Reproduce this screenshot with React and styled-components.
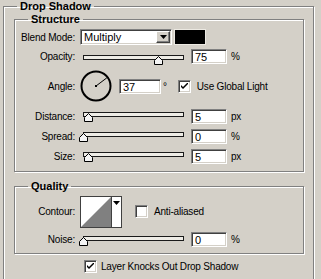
import React from 'react';
import styled, { createGlobalStyle } from 'styled-components';

const BG = '#d4d0c8';

const Global = createGlobalStyle`
  html, body { margin: 0; padding: 0; background: ${BG}; }
  body {
    font-family: "Liberation Sans", Arial, sans-serif;
    font-size: 10px;
    letter-spacing: -0.2px;
    color: #000;
  }
  #root { width: 321px; height: 279px; overflow: hidden; }
`;

const Panel = styled.fieldset`
  margin: 0 0 0 3px;
  padding: 0 0 0 10px;
  width: 311px;
  min-height: 300px;
  box-sizing: border-box;
  border: 1px solid #808080;
  box-shadow: inset 1px 1px 0 #fff, 1px 1px 0 #fff;
`;

const Group = styled.fieldset`
  margin: ${p => p.$mt || 0}px 0 0 0;
  padding: ${p => p.$pt}px 0 ${p => p.$pb}px 0;
  width: 290px;
  box-sizing: border-box;
  border: 1px solid #808080;
  box-shadow: inset 1px 1px 0 #fff, 1px 1px 0 #fff;
`;

const Legend = styled.legend`
  margin-left: ${p => p.$ml}px;
  padding: 0 3px;
  font: bold 11px/13px "Liberation Sans", Arial, sans-serif;
  letter-spacing: 0;
`;

const Row = styled.div`
  display: flex;
  align-items: center;
  height: ${p => p.$h}px;
  margin-top: ${p => p.$mt || 0}px;
  padding-left: ${p => p.$pl || 0}px;
`;

const Label = styled.span`
  width: 60px;
  margin-right: 5px;
  text-align: right;
  white-space: nowrap;
  flex: none;
`;

const Text = styled.span`
  margin-left: ${p => p.$ml || 0}px;
  white-space: nowrap;
`;

const Select = styled.div`
  display: flex;
  align-items: center;
  width: 92px;
  height: 16px;
  box-sizing: border-box;
  background: #fff;
  border: 1px solid;
  border-color: #808080 #fff #fff #808080;
  box-shadow: inset 1px 1px 0 #404040, inset -1px -1px 0 ${BG};
  padding: 1px 1px 1px 2px;
  font-size: 11px;
`;

const SelectText = styled.span`
  flex: 1;
  padding-left: 1px;
  letter-spacing: 0;
`;

const DropButton = styled.span`
  display: flex;
  align-items: center;
  justify-content: center;
  width: 14px;
  height: 12px;
  box-sizing: border-box;
  background: ${BG};
  border: 1px solid;
  border-color: #fff #404040 #404040 #fff;
  box-shadow: inset -1px -1px 0 #808080;
`;

const Swatch = styled.div`
  width: 32px;
  height: 16px;
  box-sizing: border-box;
  margin-left: 2px;
  background: #000;
  border: 1px solid #ece9e2;
`;

const Field = styled.div`
  width: ${p => p.$w || 36}px;
  height: 15px;
  box-sizing: border-box;
  margin-left: ${p => p.$ml || 0}px;
  background: #fff;
  border: 1px solid;
  border-color: #808080 #fff #fff #808080;
  box-shadow: inset 1px 1px 0 #404040, inset -1px -1px 0 ${BG};
  padding: 1px 0 0 3px;
  font-size: 11px;
  line-height: 12px;
  letter-spacing: 0;
`;

const Unit = styled.span`
  margin-left: 4px;
  font-size: 10px;
`;

const SliderBox = styled.div`
  position: relative;
  flex: none;
  width: 106px;
  height: 10px;
  align-self: flex-start;
  margin-top: ${p => p.$top}px;
`;

const Track = styled.div`
  margin-left: 3px;
  width: 101px;
  height: 5px;
  box-sizing: border-box;
  background: #eeece6;
  border: 1px solid #1a1a1a;
`;

const ThumbSvg = styled.svg`
  position: absolute;
  top: 1px;
  display: block;
`;

const Dial = styled.svg`
  display: block;
  flex: none;
`;

const CheckBox = styled.span`
  display: inline-flex;
  align-items: center;
  justify-content: center;
  flex: none;
  width: 13px;
  height: 13px;
  box-sizing: border-box;
  margin-left: ${p => p.$ml || 0}px;
  background: #fff;
  border: 1px solid;
  border-color: #808080 #fff #fff #808080;
  box-shadow: inset 1px 1px 0 #404040, inset -1px -1px 0 ${BG};
`;

const Contour = styled.div`
  display: flex;
  width: 42px;
  height: 32px;
  box-sizing: border-box;
  border: 1px solid #404040;
  background: #fff;
  flex: none;
`;

const ContourPreview = styled.svg`
  display: block;
  width: 30px;
  height: 30px;
  border-right: 1px solid #404040;
`;

const ContourArrow = styled.div`
  flex: 1;
  display: flex;
  justify-content: center;
  padding-top: 4px;
`;

function Thumb({ left }) {
  return (
    <ThumbSvg width="9" height="9" viewBox="0 0 9 9" style={{ left }}>
      <path d="M0.5 8.5 V4.5 L4.5 0.5 L8.5 4.5 V8.5 Z" fill="#f4f4f4" stroke="#000" />
    </ThumbSvg>
  );
}

function Slider({ thumb, top }) {
  return (
    <SliderBox $top={top}>
      <Track />
      <Thumb left={thumb} />
    </SliderBox>
  );
}

function Tick() {
  return (
    <svg width="7" height="7" viewBox="0 0 7 7">
      <path d="M0 2 L0 4 L2 6 L7 1 L7 -1 L2 4 Z" fill="#000" />
    </svg>
  );
}

function Arrow() {
  return (
    <svg width="7" height="4" viewBox="0 0 7 4">
      <path d="M0 0 H7 L3.5 4 Z" fill="#000" />
    </svg>
  );
}

const rad = (37 * Math.PI) / 180;

export default function App() {
  return (
    <>
      <Global />
      <Panel>
        <Legend $ml={3}>Drop Shadow</Legend>
        <Group $pt={2} $pb={5}>
          <Legend $ml={13}>Structure</Legend>
          <Row $h={18}>
            <Label>Blend Mode:</Label>
            <Select>
              <SelectText>Multiply</SelectText>
              <DropButton><Arrow /></DropButton>
            </Select>
            <Swatch />
          </Row>
          <Row $h={20}>
            <Label>Opacity:</Label>
            <Slider thumb={74} top={9} />
            <Field $ml={5}>75</Field>
            <Unit>%</Unit>
          </Row>
          <Row $h={40}>
            <Label>Angle:</Label>
            <Dial width="32" height="32" viewBox="0 0 32 32">
              <circle cx="16" cy="16" r="14.5" fill="none" stroke="#000" strokeWidth="2" />
              <rect x="15" y="15" width="2" height="2" fill="#000" />
              <line x1="16" y1="16" x2={16 + 13.5 * Math.cos(rad)} y2={16 - 13.5 * Math.sin(rad)} stroke="#000" strokeWidth="1" />
            </Dial>
            <Field $ml={7} $w={42}>37</Field>
            <Text $ml={2}>°</Text>
            <CheckBox $ml={11}><Tick /></CheckBox>
            <Text $ml={6}>Use Global Light</Text>
          </Row>
          <Row $h={20}>
            <Label>Distance:</Label>
            <Slider thumb={4} top={6} />
            <Field $ml={5}>5</Field>
            <Unit>px</Unit>
          </Row>
          <Row $h={20}>
            <Label>Spread:</Label>
            <Slider thumb={-1} top={6} />
            <Field $ml={5}>0</Field>
            <Unit>%</Unit>
          </Row>
          <Row $h={20}>
            <Label>Size:</Label>
            <Slider thumb={4} top={6} />
            <Field $ml={5}>5</Field>
            <Unit>px</Unit>
          </Row>
        </Group>
        <Group $mt={8} $pt={1} $pb={4}>
          <Legend $ml={13}>Quality</Legend>
          <Row $h={35}>
            <Label>Contour:</Label>
            <Contour>
              <ContourPreview viewBox="0 0 30 30">
                <path d="M0 30 L30 0 V30 Z" fill="#808080" />
              </ContourPreview>
              <ContourArrow><Arrow /></ContourArrow>
            </Contour>
            <CheckBox $ml={13} />
            <Text $ml={6}>Anti-aliased</Text>
          </Row>
          <Row $h={20}>
            <Label>Noise:</Label>
            <Slider thumb={-1} top={7} />
            <Field $ml={5}>0</Field>
            <Unit>%</Unit>
          </Row>
        </Group>
        <Row $h={19} $mt={3} $pl={70}>
          <CheckBox><Tick /></CheckBox>
          <Text $ml={4}>Layer Knocks Out Drop Shadow</Text>
        </Row>
      </Panel>
    </>
  );
}
